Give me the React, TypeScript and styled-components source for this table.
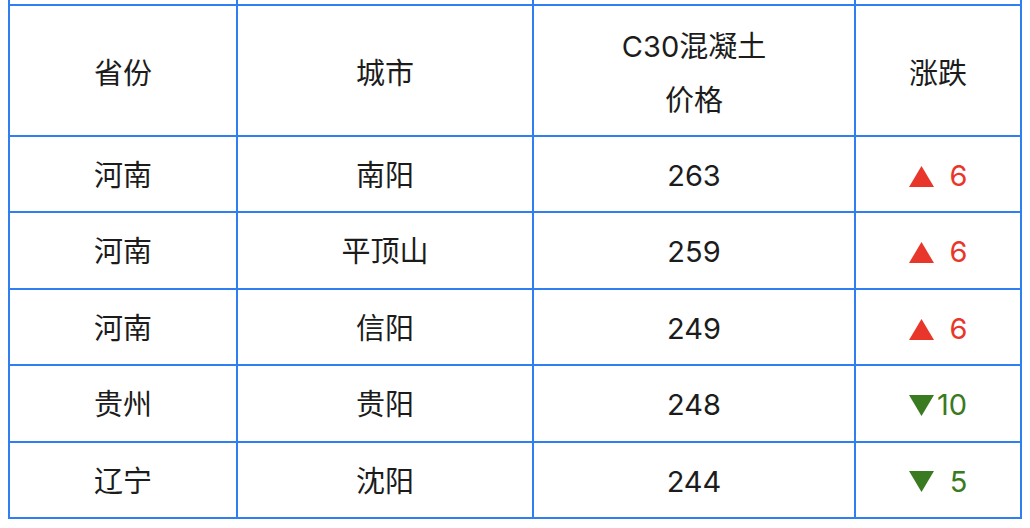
import React from "react";
import styled, { createGlobalStyle } from "styled-components";

const Global = createGlobalStyle`
  html, body { background: #ffffff; overflow: hidden; }
  body {
    margin: 0 8px;
    font-family: Inter, "Noto Sans CJK SC", sans-serif;
    color: #1c1c1c;
  }
`;

const BLUE = "#2f7ef2";

const Table = styled.table`
  width: 1014px;
  border-collapse: separate;
  border-spacing: 0;
  border-left: 2px solid ${BLUE};
  table-layout: fixed;
  font-size: 29px;
`;

const Cell = styled.td<{ $head?: boolean }>`
  border-right: 2px solid ${BLUE};
  border-bottom: 2px solid ${BLUE};
  text-align: center;
  vertical-align: middle;
  padding: ${(p) => (p.$head ? "14px 0 7px" : "12px 0 8px")};
  line-height: ${(p) => (p.$head ? "54px" : "54.4px")};
  font-weight: 400;
  white-space: nowrap;
`;

const CutCell = styled.td`
  border-right: 2px solid ${BLUE};
  border-bottom: 2px solid ${BLUE};
  height: 4px;
  padding: 0;
  line-height: 0;
  font-size: 0;
`;

const Change = styled.span<{ $up: boolean }>`
  display: inline-flex;
  align-items: center;
  vertical-align: top;
  color: ${(p) => (p.$up ? "#e8372a" : "#3a7a20")};
`;

const Tri = styled.svg<{ $gap: number }>`
  display: block;
  width: 25px;
  height: 21px;
  margin-right: ${(p) => p.$gap}px;
  flex: none;
`;

type Row = { prov: string; city: string; price: number; delta: number; up: boolean };

const rows: Row[] = [
  { prov: "河南", city: "南阳", price: 263, delta: 6, up: true },
  { prov: "河南", city: "平顶山", price: 259, delta: 6, up: true },
  { prov: "河南", city: "信阳", price: 249, delta: 6, up: true },
  { prov: "贵州", city: "贵阳", price: 248, delta: 10, up: false },
  { prov: "辽宁", city: "沈阳", price: 244, delta: 5, up: false },
];

function Delta({ up, value }: { up: boolean; value: number }) {
  const gap = value >= 10 ? 3 : 16;
  return (
    <Change $up={up}>
      <Tri $gap={gap} viewBox="0 0 25 21">
        {up ? (
          <polygon points="12.5,0 25,21 0,21" fill="currentColor" />
        ) : (
          <polygon points="0,0 25,0 12.5,21" fill="currentColor" />
        )}
      </Tri>
      <span>{value}</span>
    </Change>
  );
}

export default function App() {
  return (
    <>
      <Global />
      <Table>
        <colgroup>
          <col style={{ width: 228 }} />
          <col style={{ width: 296 }} />
          <col style={{ width: 322 }} />
          <col style={{ width: 166 }} />
        </colgroup>
        <tbody>
          <tr>
            <CutCell />
            <CutCell />
            <CutCell />
            <CutCell />
          </tr>
          <tr>
            <Cell $head>省份</Cell>
            <Cell $head>城市</Cell>
            <Cell $head>
              C30混凝土
              <br />
              价格
            </Cell>
            <Cell $head>涨跌</Cell>
          </tr>
          {rows.map((r, i) => (
            <tr key={i}>
              <Cell>{r.prov}</Cell>
              <Cell>{r.city}</Cell>
              <Cell>{r.price}</Cell>
              <Cell>
                <Delta up={r.up} value={r.delta} />
              </Cell>
            </tr>
          ))}
        </tbody>
      </Table>
    </>
  );
}
